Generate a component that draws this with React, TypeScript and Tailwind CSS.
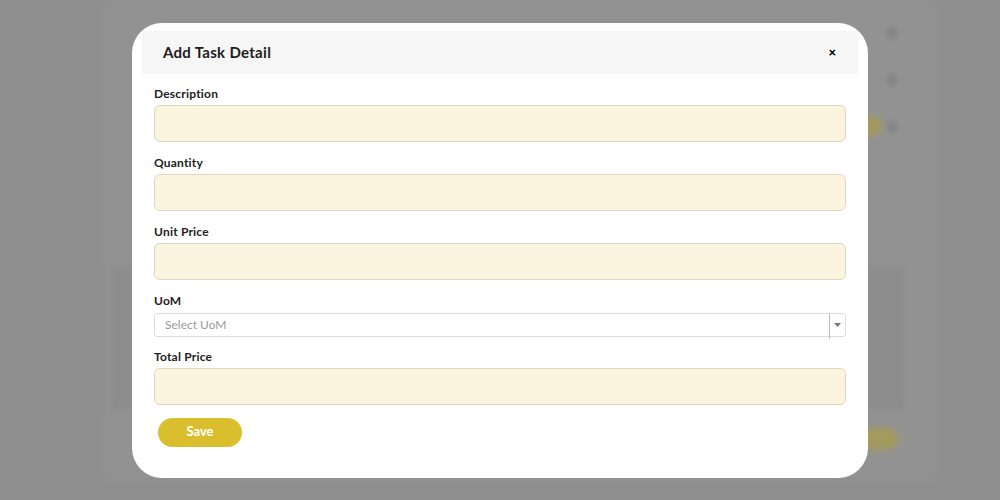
import React from "react";

const font = { fontFamily: "Lato, 'Open Sans', sans-serif" };

function Field({ label }: { label: string }) {
  return (
    <div className="flex flex-col">
      <label className="text-[12px] font-bold text-[#222] leading-4 tracking-[0.2px]">{label}</label>
      <div className="mt-[3px] h-[37px] rounded-[6px] border border-[#ddd7c0] bg-[#fbf5e0]" />
    </div>
  );
}

export default function App() {
  return (
    <div className="relative w-[1000px] h-[500px] overflow-hidden bg-[#8f8f90]" style={font}>
      {/* blurred page behind */}
      <div className="absolute inset-0 blur-[3px]">
        <div className="absolute left-[105px] top-0 w-[830px] h-[480px] bg-[#929292]" />
        <div className="absolute left-[110px] top-[265px] w-[795px] h-[145px] bg-[#8d8d8d]" />
        <div className="absolute left-[887px] top-[28px] w-[10px] h-[10px] rounded-full bg-[#7f7f7f]" />
        <div className="absolute left-[887px] top-[75px] w-[10px] h-[10px] rounded-full bg-[#7f7f7f]" />
        <div className="absolute left-[887px] top-[122px] w-[10px] h-[10px] rounded-full bg-[#7f7f7f]" />
        <div className="absolute left-[860px] top-[116px] w-[22px] h-[20px] rounded-full bg-[#a39a5c]" />
        <div className="absolute left-[860px] top-[428px] w-[38px] h-[22px] rounded-full bg-[#a39a5c]" />
      </div>

      <div className="relative flex h-full items-center justify-center">
        <div className="w-[736px] h-[455px] rounded-[30px] bg-white px-[10px] pt-[8px]">
          <div className="flex h-[43px] items-center justify-between bg-[#f6f6f6] pl-[21px] pr-[22px]">
            <h2 className="text-[15px] font-bold text-[#1c1c1c] tracking-[0.3px]">Add Task Detail</h2>
            <span className="text-[13px] font-black leading-none text-black">×</span>
          </div>

          <div className="flex flex-col gap-[13px] px-[12px] pt-[12px]">
            <Field label="Description" />
            <Field label="Quantity" />
            <Field label="Unit Price" />
            <div className="flex flex-col">
              <label className="text-[12px] font-bold text-[#222] leading-4 tracking-[0.2px]">UoM</label>
              <div className="mt-[4px] flex h-[24px] items-stretch rounded-[3px] border border-[#dcdcdc] bg-white">
                <span className="flex flex-1 items-center pl-[10px] text-[12px] text-[#9a9a9a]">Select UoM</span>
                <span className="relative flex w-[16px] items-center justify-center border-l border-[#bdbdbd]">
                  <span className="absolute left-[-1px] top-full h-[3px] border-l border-[#bdbdbd]" />
                  <svg width="7" height="4" viewBox="0 0 7 4">
                    <path d="M0 0h7L3.5 4z" fill="#777" />
                  </svg>
                </span>
              </div>
            </div>
            <div className="-mt-[1px]">
              <Field label="Total Price" />
            </div>
            <div className="pl-[4px]">
              <button className="h-[29px] w-[84px] rounded-full bg-[#d9bf2e] text-[13px] font-bold text-white">
                Save
              </button>
            </div>
          </div>
        </div>
      </div>
    </div>
  );
}
